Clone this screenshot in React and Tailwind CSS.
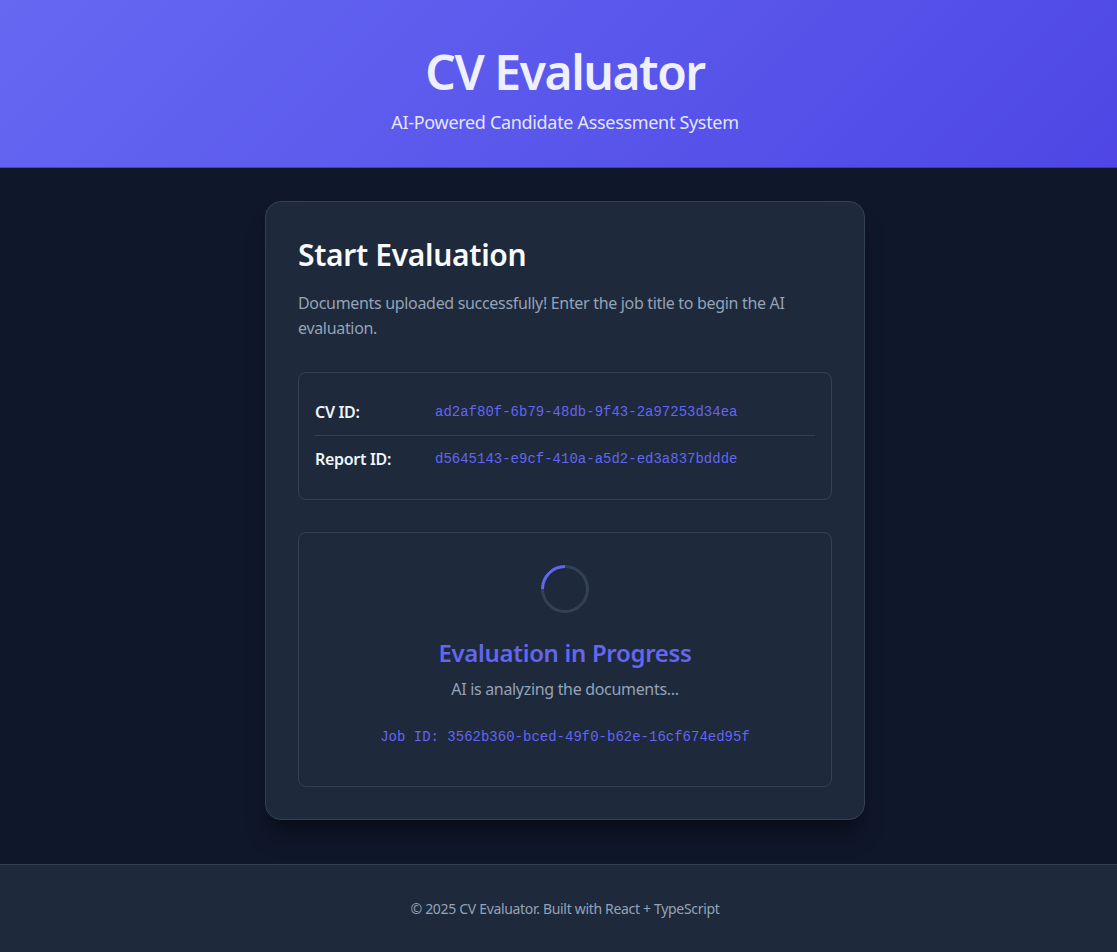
const ids = [
  { label: "CV ID:", value: "ad2af80f-6b79-48db-9f43-2a97253d34ea" },
  { label: "Report ID:", value: "d5645143-e9cf-410a-a5d2-ed3a837bddde" },
];

const sans = "font-['Segoe_UI','Noto_Sans',sans-serif]";
const mono = "font-['Courier_New','Liberation_Mono',monospace] tracking-normal";

function Spinner() {
  return (
    <div className="h-12 w-12 rounded-full border-[3px] border-[#334155] border-t-[#6366f1] -rotate-45" />
  );
}

export default function App() {
  return (
    <div className={`min-h-screen flex flex-col bg-[#0f172a] tracking-[-0.02em] ${sans}`}>
      {/* Header */}
      <header className="h-[168px] flex flex-col items-center pt-[43px] pl-[13px] bg-linear-135 from-[#6668f2] to-[#4f46e5] border-b border-[#1e1b4b]/40">
        <h1 className="text-5xl leading-[58px] font-semibold tracking-[-0.03em] text-[#eef0ff]">CV Evaluator</h1>
        <p className="mt-2 text-lg leading-[27px] text-[#eef0ff]/95">AI-Powered Candidate Assessment System</p>
      </header>

      {/* Main */}
      <main className="flex-1 flex justify-center pt-[33px] pb-11 pl-[13px]">
        <div className="w-[600px] self-start rounded-2xl border border-[#334155] bg-[#1e293b] px-8 pt-[35px] pb-8 shadow-xl shadow-black/30">
          <h2 className="text-[30px] leading-9 font-semibold text-[#f8fafc]">Start Evaluation</h2>
          <p className="mt-[18px] text-base leading-[25px] text-[#94a3b8]">
            Documents uploaded successfully! Enter the job title to begin the AI evaluation.
          </p>

          {/* IDs */}
          <div className="mt-[31px] rounded-lg border border-[#334155] px-4 py-4">
            {ids.map((row, i) => (
              <div
                key={row.label}
                className={`flex items-center ${i === 0 ? "py-[11px] border-b border-[#334155]" : "pt-[11px] pb-3"}`}
              >
                <span className="w-[120px] text-base leading-6 font-semibold text-[#f1f5f9]">{row.label}</span>
                <span className={`${mono} text-sm text-[#6366f1]`}>{row.value}</span>
              </div>
            ))}
          </div>

          {/* Progress */}
          <div className="mt-8 rounded-lg border border-[#334155] pt-8 pb-[39px] flex flex-col items-center">
            <Spinner />
            <h3 className="mt-6 text-2xl leading-8 font-semibold text-[#6366f1]">Evaluation in Progress</h3>
            <p className="mt-2 text-base leading-6 text-[#94a3b8]">AI is analyzing the documents...</p>
            <p className={`mt-[26px] ${mono} text-sm leading-5 text-[#6366f1]`}>
              Job ID: 3562b360-bced-49f0-b62e-16cf674ed95f
            </p>
          </div>
        </div>
      </main>

      {/* Footer */}
      <footer className="border-t border-[#334155] bg-[#1e293b] py-8 pl-[13px] text-center">
        <p className="text-sm leading-6 text-[#94a3b8]">© 2025 CV Evaluator. Built with React + TypeScript</p>
      </footer>
    </div>
  );
}
